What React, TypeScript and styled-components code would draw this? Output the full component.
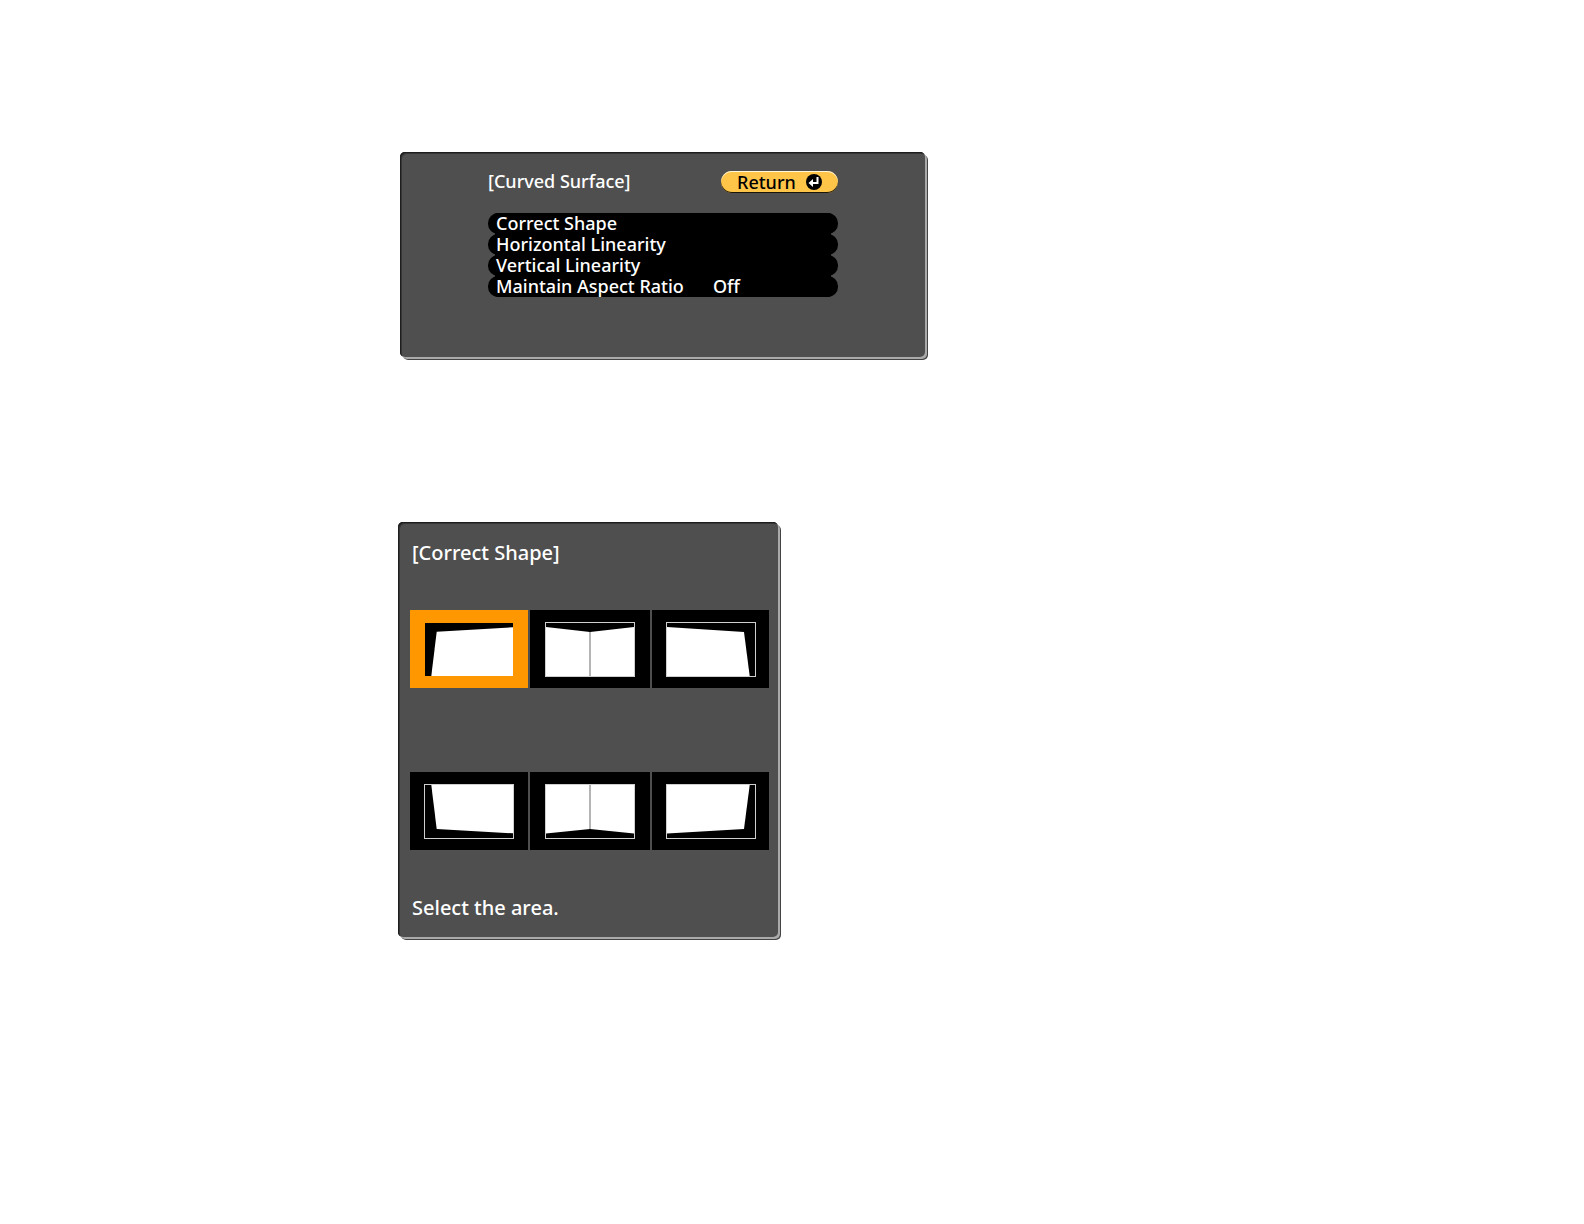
import React, { useState } from "react";
import styled, { createGlobalStyle } from "styled-components";

const GlobalStyle = createGlobalStyle`
  *, *::before, *::after { box-sizing: border-box; }
  body {
    margin: 0;
    background: #ffffff;
    font-family: "Noto Sans", "Liberation Sans", sans-serif;
  }
  button { font: inherit; border: 0; padding: 0; margin: 0; text-align: left; cursor: pointer; }
`;

const Page = styled.main`
  display: flex;
  flex-direction: column;
  gap: 165px;
  padding: 152px 24px;
`;

const Figure = styled.div<{ $inset: number; $width: number }>`
  box-sizing: content-box;
  max-width: ${(p) => p.$width}px;
  padding-left: ${(p) => p.$inset}px;
`;

const Panel = styled.section<{ $padding: string; $fontSize: number }>`
  padding: ${(p) => p.$padding};
  border-radius: 5px;
  background: #4f4f4f;
  color: #ffffff;
  font-size: ${(p) => p.$fontSize}px;
  font-weight: 500;
  line-height: 21px;
  box-shadow: inset 1px 1px 0 #1e1e1e, inset 2px 2px 0 #363636, 2px 2px 0 #aaaaaa, 3px 3px 0 #444444;
`;

const Title = styled.h2`
  margin: 0;
  font-size: inherit;
  font-weight: 500;
  line-height: 20px;
`;

const Header = styled.header`
  display: flex;
  justify-content: space-between;
  align-items: flex-start;
  margin-bottom: 20px;
`;

const ReturnButton = styled.button`
  display: flex;
  align-items: center;
  justify-content: space-between;
  width: 117px;
  height: 22px;
  padding: 0 16px;
  border-radius: 11px;
  background: #ffc549;
  color: #000000;
  line-height: 20px;
  box-shadow: inset 0 1px 0 #fff6dc, inset 0 -1px 0 #1c1608;
`;

const MenuRow = styled.button`
  display: grid;
  grid-template-columns: 217px 1fr;
  width: 100%;
  height: 21px;
  padding: 0 8px;
  border-radius: 10px;
  background: #000000;
  color: #ffffff;
`;

const Menu = styled.div`
  display: flex;
  flex-direction: column;
  background: linear-gradient(#000000, #000000) center / calc(100% - 14px) 100% no-repeat;
  border-radius: 10px;
`;

const AreaGrid = styled.div`
  display: grid;
  grid-template-columns: 118fr 120fr 117fr;
  gap: 84px 2px;
  margin: 47px 0;
`;

const AreaTile = styled.button<{ $selected: boolean }>`
  display: flex;
  align-items: center;
  justify-content: center;
  height: 78px;
  background: ${(p) => (p.$selected ? "#ff9800" : "#000000")};
`;

const Hint = styled.p`
  margin: 0 2px;
`;

const PanelTitle = styled(Title)`
  margin: 0 2px;
`;

const ReturnIcon = () => (
  <svg width="16" height="16" viewBox="0 0 16 16" aria-hidden="true">
    <circle cx="8" cy="8" r="8" fill="#000" />
    <path d="M11.5 3v6H6.5" fill="none" stroke="#fff" strokeWidth="2" />
    <path d="M2.5 9L7 5v8z" fill="#fff" />
  </svg>
);

type Area = { name: string; points: string; seam?: [number, number] };

const areas: Area[] = [
  { name: "Top left", points: "12.7,9.7 89,5.3 89,54 7.3,54" },
  { name: "Top center", points: "1,5 45,10 89,5 89,54 1,54", seam: [10, 54] },
  { name: "Top right", points: "1,5 78,10 83.7,54 1,54" },
  { name: "Bottom left", points: "7.3,1 89,1 89,49.3 12.7,45" },
  { name: "Bottom center", points: "1,1 89,1 89,49.5 45,45 1,49.5", seam: [1, 45] },
  { name: "Bottom right", points: "1,1 83.7,1 78,45 1,49.5" },
];

const AreaDrawing = ({ area, selected }: { area: Area; selected: boolean }) => (
  <svg width="90" height="55" viewBox="0 0 90 55" aria-hidden="true">
    <rect x="1" y="1" width="88" height="53" fill="#000" />
    {!selected && <rect x="0.5" y="0.5" width="89" height="54" fill="none" stroke="#cfcfcf" />}
    <polygon points={area.points} fill="#fff" />
    {area.seam && <path d={`M45 ${area.seam[0]}V${area.seam[1]}`} stroke="#b5b5b5" strokeWidth="2" />}
  </svg>
);

const menuItems = [
  { label: "Correct Shape" },
  { label: "Horizontal Linearity" },
  { label: "Vertical Linearity" },
  { label: "Maintain Aspect Ratio", value: "Off" },
];

export default function App() {
  const [selected, setSelected] = useState(0);
  return (
    <>
      <GlobalStyle />
      <Page>
        <Figure $inset={376} $width={525}>
          <Panel $padding="19px 87px 60px 88px" $fontSize={18}>
            <Header>
              <Title>[Curved Surface]</Title>
              <ReturnButton type="button">
                Return
                <ReturnIcon />
              </ReturnButton>
            </Header>
            <Menu>
              {menuItems.map((item) => (
                <MenuRow type="button" key={item.label}>
                  <span>{item.label}</span>
                  <span>{item.value}</span>
                </MenuRow>
              ))}
            </Menu>
          </Panel>
        </Figure>
        <Figure $inset={374} $width={380}>
          <Panel $padding="21px 9px 19px 12px" $fontSize={20}>
            <PanelTitle>[Correct Shape]</PanelTitle>
            <AreaGrid>
              {areas.map((area, i) => (
                <AreaTile
                  type="button"
                  key={area.name}
                  aria-label={area.name}
                  aria-pressed={i === selected}
                  $selected={i === selected}
                  onClick={() => setSelected(i)}
                >
                  <AreaDrawing area={area} selected={i === selected} />
                </AreaTile>
              ))}
            </AreaGrid>
            <Hint>Select the area.</Hint>
          </Panel>
        </Figure>
      </Page>
    </>
  );
}
